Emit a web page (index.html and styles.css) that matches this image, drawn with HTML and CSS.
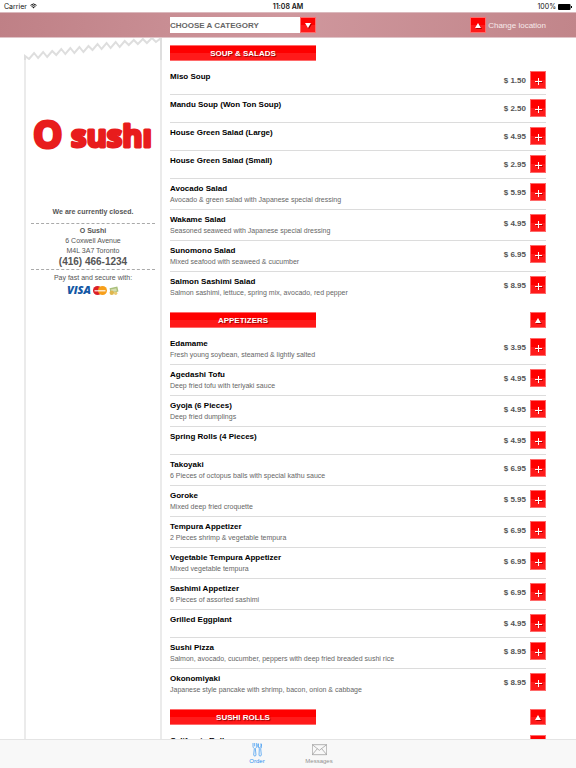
FILE: index.html
```
<!DOCTYPE html>
<html lang="en">
<head>
  <meta charset="UTF-8" />
  <meta name="viewport" content="width=device-width, initial-scale=1" />
  <title>O Sushi</title>
  <link rel="stylesheet" href="styles.css">
</head>
<body>
  <div class="status-bar">
    <span class="carrier">Carrier
      <svg class="wifi" viewBox="0 0 14 11">
        <path d="M1 4.2a8.6 8.6 0 0 1 12 0M3.2 6.6a5.4 5.4 0 0 1 7.6 0" fill="none" stroke="#111" stroke-width="2"/>
        <path d="M4.8 8.2a3.2 3.2 0 0 1 4.4 0L7 10.6z" fill="#111"/>
      </svg>
    </span>
    <span class="clock">11:08 AM</span>
    <span class="battery">100%
      <svg viewBox="0 0 28 12">
        <rect x="0" y="0" width="25" height="12" rx="2" fill="#000"/>
        <rect x="26" y="4" width="2" height="4" fill="#000"/>
      </svg>
    </span>
  </div>

  <header class="toolbar">
    <div class="category">
      <select aria-label="Category">
        <option>CHOOSE A CATEGORY</option>
        <option>SOUP &amp; SALADS</option>
        <option>APPETIZERS</option>
        <option>SUSHI ROLLS</option>
      </select>
      <span class="red-box category-arrow"><svg viewBox="0 0 6 5"><path d="M0 0h6L3 5z"/></svg></span>
    </div>
    <a class="location" href="#location">
      <span class="red-box"><svg viewBox="0 0 6 5"><path d="M3 0l3 5H0z"/></svg></span>
      Change location
    </a>
  </header>

  <div class="content">
    <aside class="receipt">
      <!-- Torn paper edge -->
      <svg class="torn" viewBox="0 0 137 22" preserveAspectRatio="none">
        <path d="M1 22V18L5 21L10 15L14 20L19 14L23 19L28 13L32 17L37 11L41 16L46 10L50 15L55 9L59 14L64 8L68 12L73 6L77 11L82 5L86 10L91 4L95 9L100 3L104 7L109 2L113 6L118 1L122 5L127 0L131 4L136 0V22" fill="#fff" stroke="#dedede" stroke-width="2"/>
      </svg>
      <div class="receipt-body">
        <svg class="logo" viewBox="0 0 124 50" role="img" aria-label="O sushi">
          <text x="2" y="38" font-size="37">O</text>
          <text x="40" y="37" font-size="31">sushı</text>
        </svg>
        <p class="closed">We are currently closed.</p>
        <address>
          <strong>O Sushi</strong>
          <span>6 Coxwell Avenue</span>
          <span>M4L 3A7 Toronto</span>
          <a href="tel:4164661234">(416) 466-1234</a>
        </address>
        <p class="pay">Pay fast and secure with:</p>
        <div class="cards">
          <span class="visa">VISA</span>
          <svg class="mastercard" viewBox="0 0 28 18">
            <circle cx="9" cy="9" r="9" fill="#dc1f26"/>
            <circle cx="19" cy="9" r="9" fill="#f79f1a"/>
            <path d="M3 8h22v3H3z" fill="#fff" opacity=".75"/>
          </svg>
          <svg class="cash" viewBox="0 0 18 16">
            <path d="M1 4l14-3 2 9-14 4z" fill="#a9bf7b"/>
            <path d="M3 6l10-2 1 5-9 2z" fill="#d5deb2"/>
            <circle cx="5" cy="12" r="4" fill="#dfb64d"/>
            <circle cx="12" cy="13" r="3" fill="#eccb72"/>
          </svg>
        </div>
      </div>
    </aside>

    <main class="menu">
      <section>
        <div class="section-head"><h2>SOUP &amp; SALADS</h2></div>
        <ul>
          <li><div><h3>Miso Soup</h3></div><span class="price">$ 1.50</span><button class="add" aria-label="Add"></button></li>
          <li><div><h3>Mandu Soup (Won Ton Soup)</h3></div><span class="price">$ 2.50</span><button class="add" aria-label="Add"></button></li>
          <li><div><h3>House Green Salad (Large)</h3></div><span class="price">$ 4.95</span><button class="add" aria-label="Add"></button></li>
          <li><div><h3>House Green Salad (Small)</h3></div><span class="price">$ 2.95</span><button class="add" aria-label="Add"></button></li>
          <li><div><h3>Avocado Salad</h3><p>Avocado &amp; green salad with Japanese special dressing</p></div><span class="price">$ 5.95</span><button class="add" aria-label="Add"></button></li>
          <li><div><h3>Wakame Salad</h3><p>Seasoned seaweed with Japanese special dressing</p></div><span class="price">$ 4.95</span><button class="add" aria-label="Add"></button></li>
          <li><div><h3>Sunomono Salad</h3><p>Mixed seafood with seaweed &amp; cucumber</p></div><span class="price">$ 6.95</span><button class="add" aria-label="Add"></button></li>
          <li><div><h3>Salmon Sashimi Salad</h3><p>Salmon sashimi, lettuce, spring mix, avocado, red pepper</p></div><span class="price">$ 8.95</span><button class="add" aria-label="Add"></button></li>
        </ul>
      </section>

      <section>
        <div class="section-head">
          <h2>APPETIZERS</h2>
          <button class="red-box" aria-label="Back to top"><svg viewBox="0 0 6 5"><path d="M3 0l3 5H0z"/></svg></button>
        </div>
        <ul>
          <li><div><h3>Edamame</h3><p>Fresh young soybean, steamed &amp; lightly salted</p></div><span class="price">$ 3.95</span><button class="add" aria-label="Add"></button></li>
          <li><div><h3>Agedashi Tofu</h3><p>Deep fried tofu with teriyaki sauce</p></div><span class="price">$ 4.95</span><button class="add" aria-label="Add"></button></li>
          <li><div><h3>Gyoja (6 Pieces)</h3><p>Deep fried dumplings</p></div><span class="price">$ 4.95</span><button class="add" aria-label="Add"></button></li>
          <li><div><h3>Spring Rolls (4 Pieces)</h3></div><span class="price">$ 4.95</span><button class="add" aria-label="Add"></button></li>
          <li><div><h3>Takoyaki</h3><p>6 Pieces of octopus balls with special kathu sauce</p></div><span class="price">$ 6.95</span><button class="add" aria-label="Add"></button></li>
          <li><div><h3>Goroke</h3><p>Mixed deep fried croquette</p></div><span class="price">$ 5.95</span><button class="add" aria-label="Add"></button></li>
          <li><div><h3>Tempura Appetizer</h3><p>2 Pieces shrimp &amp; vegetable tempura</p></div><span class="price">$ 6.95</span><button class="add" aria-label="Add"></button></li>
          <li><div><h3>Vegetable Tempura Appetizer</h3><p>Mixed vegetable tempura</p></div><span class="price">$ 6.95</span><button class="add" aria-label="Add"></button></li>
          <li><div><h3>Sashimi Appetizer</h3><p>6 Pieces of assorted sashimi</p></div><span class="price">$ 6.95</span><button class="add" aria-label="Add"></button></li>
          <li><div><h3>Grilled Eggplant</h3></div><span class="price">$ 4.95</span><button class="add" aria-label="Add"></button></li>
          <li><div><h3>Sushi Pizza</h3><p>Salmon, avocado, cucumber, peppers with deep fried breaded sushi rice</p></div><span class="price">$ 8.95</span><button class="add" aria-label="Add"></button></li>
          <li><div><h3>Okonomiyaki</h3><p>Japanese style pancake with shrimp, bacon, onion &amp; cabbage</p></div><span class="price">$ 8.95</span><button class="add" aria-label="Add"></button></li>
        </ul>
      </section>

      <section>
        <div class="section-head">
          <h2>SUSHI ROLLS</h2>
          <button class="red-box" aria-label="Back to top"><svg viewBox="0 0 6 5"><path d="M3 0l3 5H0z"/></svg></button>
        </div>
        <ul>
          <li><div><h3>California Roll</h3></div><button class="add" aria-label="Add"></button></li>
        </ul>
      </section>
    </main>
  </div>

  <nav class="tabs">
    <a class="active" href="#order">
      <svg viewBox="0 0 30 45" fill="none" stroke="#2b8ff0" stroke-width="2">
        <path d="M3 3v10c0 4 3 5 4 7L5 39c0 4 7 4 7 0L10 20c2-2 4-4 4-7V3M8 3v10"/>
        <path d="M19 5c-3 7-1 12 3 15l-1 19c0 4 7 4 7 0l-2-19c4-4 4-10 1-15v9l-4 3-4-3z"/>
      </svg>
      Order
    </a>
    <a href="#messages">
      <svg viewBox="0 0 45 45" fill="none" stroke="#929292" stroke-width="2">
        <path d="M1 8h43v30H1zM1 8l21 17L44 8M1 38l15-18M44 38L29 20"/>
      </svg>
      Messages
    </a>
  </nav>
</body>
</html>
```
FILE: styles.css
```
* {
  box-sizing: border-box;
}
body {
  margin: 0;
  height: 100vh;
  display: flex;
  flex-direction: column;
  background: #fff;
  color: #555;
  font-family: "Liberation Sans", Arial, sans-serif;
  font-size: 7px;
  line-height: 11px;
}
h2, h3, p, ul {
  margin: 0;
  padding: 0;
}
a {
  color: inherit;
  text-decoration: none;
}
button {
  border: 0;
  padding: 0;
  cursor: pointer;
}

/* iPad status bar */
.status-bar {
  display: grid;
  grid-template-columns: 1fr auto 1fr;
  height: 12px;
  padding: 0 4px;
  line-height: 13px;
  color: #111;
  font-family: Inter, sans-serif;
}
.clock {
  font-weight: 600;
}
.battery {
  text-align: right;
}
.wifi {
  width: 7px;
  height: 6px;
  margin-left: 1px;
}
.battery svg {
  width: 14px;
  height: 6px;
  vertical-align: -1px;
}

/* Toolbar */
.toolbar {
  flex: none;
  display: flex;
  align-items: center;
  justify-content: space-between;
  height: 26px;
  padding: 0 30px 0 170px;
  background: linear-gradient(100deg, #bf8086, #cf979d 50%, #c1858a);
  border-top: 1px solid #dbb9bd;
  border-bottom: 1px solid #e0c4c8;
}
.category {
  position: relative;
  width: 146px;
  height: 16px;
}
.category select {
  appearance: none;
  display: block;
  width: 100%;
  height: 16px;
  padding: 0;
  border: 0;
  border-radius: 0;
  background: #fff;
  color: #666;
  font: bold 8px "Liberation Sans", Arial, sans-serif;
}
.category-arrow {
  position: absolute;
  top: 0;
  right: 0;
  pointer-events: none;
}
.red-box,
.add,
h2 {
  background: linear-gradient(#fe0000 50%, #ff1a1a 50%);
  border: 1px solid #ff6a6a;
}
.red-box {
  display: flex;
  align-items: center;
  justify-content: center;
  width: 16px;
  height: 16px;
}
.red-box svg {
  width: 6px;
  height: 5px;
  fill: #fff;
  filter: drop-shadow(1px 1px 0 #a00);
}
.location {
  display: flex;
  align-items: center;
  gap: 2px;
  color: #f7e9ea;
  font-size: 8px;
}

.content {
  flex: 1;
  min-height: 0;
  display: flex;
  padding: 0 30px 0 24px;
  overflow-y: auto;
  scrollbar-width: none;
}

/* Receipt with the restaurant details */
.receipt {
  flex: none;
  display: flex;
  flex-direction: column;
  width: 138px;
  text-align: center;
}
.torn {
  display: block;
  flex: none;
  width: 100%;
  height: 22px;
}
.receipt-body {
  flex: 1;
  padding: 50px 5px 0;
  border: solid #ebebeb;
  border-width: 0 2px;
}
.logo {
  display: block;
  width: 100%;
  height: 50px;
  margin-bottom: 46px;
  overflow: visible;
  fill: #e81c1c;
  stroke: #e81c1c;
  stroke-width: 3px;
  stroke-linejoin: round;
  font-family: "Open Sans", sans-serif;
  font-weight: 700;
}
.closed {
  padding-bottom: 6px;
  border-bottom: 1px dashed #aaa;
  font-weight: bold;
}
address {
  padding: 2px 0 1px;
  border-bottom: 1px dashed #aaa;
  font-style: normal;
  line-height: 10px;
}
address > * {
  display: block;
}
address a {
  line-height: 12px;
  font-size: 10px;
  font-weight: bold;
}
.pay {
  padding-top: 2px;
}
.cards {
  display: flex;
  align-items: center;
  justify-content: center;
  gap: 2px;
}
.visa {
  color: #1458a5;
  font: italic 800 11px/14px "Open Sans", sans-serif;
}
.mastercard {
  width: 14px;
  height: 9px;
}
.cash {
  width: 10px;
  height: 9px;
}

/* Menu */
.menu {
  flex: 1;
  padding: 7px 0 0 8px;
}
.section-head {
  display: flex;
  justify-content: space-between;
  margin-bottom: 6px;
}
h2 {
  width: 146px;
  height: 16px;
  border-width: 1px 0;
  color: #fff;
  font-size: 8px;
  line-height: 15px;
  text-align: center;
  text-shadow: 1px 1px 1px #900;
}
section {
  margin-bottom: 9px;
}
li {
  display: flex;
  padding: 4px 0;
  border-bottom: 1px solid #dcdcdc;
}
li:last-child {
  border-color: transparent;
}
li div {
  flex: 1;
}
li p {
  color: #666;
}
h3 {
  color: #000;
  font-size: 8px;
}
.price {
  margin-right: 4px;
  font-size: 8px;
  font-weight: bold;
  line-height: 19px;
}
.add {
  position: relative;
  width: 16px;
  height: 18px;
}
.add::before,
.add::after {
  content: "";
  position: absolute;
  background: #fff;
  box-shadow: 1px 1px 0 #b00;
}
.add::before {
  top: 9px;
  left: 4px;
  width: 7px;
  height: 1px;
}
.add::after {
  top: 6px;
  left: 7px;
  width: 1px;
  height: 7px;
  box-shadow: none;
}

/* Bottom tabs */
.tabs {
  flex: none;
  display: flex;
  justify-content: center;
  height: 29px;
  border-top: 1px solid #e4e4e4;
  background: #f8f8f8;
  color: #929292;
  font-size: 6px;
  line-height: 9px;
}
.tabs a {
  display: flex;
  flex-direction: column;
  align-items: center;
  width: 62px;
  padding-top: 2px;
}
.tabs .active {
  color: #2b8ff0;
}
.tabs svg {
  height: 15px;
}
```
